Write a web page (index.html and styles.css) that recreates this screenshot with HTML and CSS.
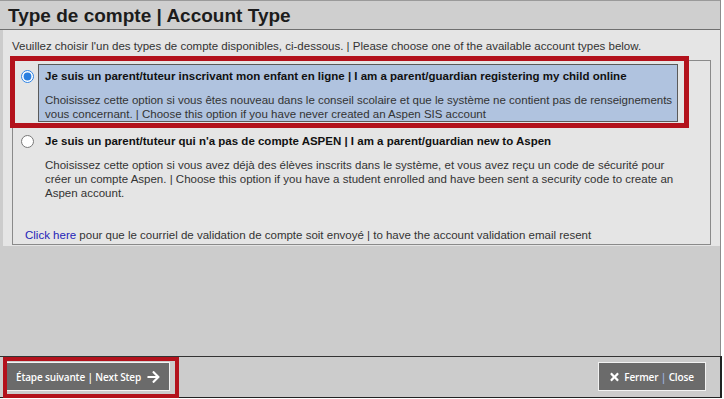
FILE: index.html
```html
<!DOCTYPE html>
<html lang="fr">
<head>
  <meta charset="UTF-8" />
  <title>Type de compte | Account Type</title>
  <link rel="stylesheet" href="styles.css">
</head>
<body>
  <div class="dialog">
    <div class="dialog-title">Type de compte | Account Type</div>

    <div class="dialog-body">
      <p class="intro">Veuillez choisir l'un des types de compte disponibles, ci-dessous. | Please choose one of the available account types below.</p>

      <div class="options">
        <label class="option selected">
          <input type="radio" name="accountType" checked>
          <div class="option-text">
            <div class="option-title">Je suis un parent/tuteur inscrivant mon enfant en ligne | I am a parent/guardian registering my child online</div>
            <div class="option-desc">Choisissez cette option si vous êtes nouveau dans le conseil scolaire et que le système ne contient pas de renseignements vous concernant. | Choose this option if you have never created an Aspen SIS account</div>
          </div>
        </label>

        <label class="option">
          <input type="radio" name="accountType">
          <div class="option-text">
            <div class="option-title">Je suis un parent/tuteur qui n'a pas de compte ASPEN | I am a parent/guardian new to Aspen</div>
            <div class="option-desc">Choisissez cette option si vous avez déjà des élèves inscrits dans le système, et vous avez reçu un code de sécurité pour créer un compte Aspen. | Choose this option if you have a student enrolled and have been sent a security code to create an Aspen account.</div>
          </div>
        </label>

        <p class="resend"><a href="#">Click here</a> pour que le courriel de validation de compte soit envoyé | to have the account validation email resent</p>
      </div>
    </div>

    <div class="filler"></div>

    <div class="dialog-footer">
      <button class="btn btn-next">
        <span>Étape suivante | Next Step</span>
        <svg class="icon" viewBox="0 0 448 512" width="13" height="14"><path fill="#fff" d="M190.5 66.9l22.2-22.2c9.4-9.4 24.6-9.4 33.9 0L441 239c9.4 9.4 9.4 24.6 0 33.9L246.6 467.3c-9.4 9.4-24.6 9.4-33.9 0l-22.2-22.2c-9.5-9.5-9.3-25 .4-34.3L311.4 296H24c-13.3 0-24-10.7-24-24v-32c0-13.3 10.7-24 24-24h287.4L190.9 101.2c-9.8-9.3-10-24.8-.4-34.3z"/></svg>
      </button>
      <button class="btn btn-close">
        <svg class="icon" viewBox="0 0 352 512" width="9" height="12"><path fill="#fff" d="M242.7 256l100.1-100.1c12.3-12.3 12.3-32.2 0-44.5l-22.2-22.2c-12.3-12.3-32.2-12.3-44.5 0L176 189.3 75.9 89.2c-12.3-12.3-32.2-12.3-44.5 0L9.2 111.4c-12.3 12.3-12.3 32.2 0 44.5L109.3 256 9.2 356.1c-12.3 12.3-12.3 32.2 0 44.5l22.2 22.2c12.3 12.3 32.2 12.3 44.5 0L176 322.7l100.1 100.1c12.3 12.3 32.2 12.3 44.5 0l22.2-22.2c12.3-12.3 12.3-32.2 0-44.5L242.7 256z"/></svg>
        <span>Fermer <span class="sep">|</span> Close</span>
      </button>
    </div>

    <!-- cadres rouges d'annotation -->
    <div class="mark mark-option"></div>
    <div class="mark mark-next"></div>
  </div>
</body>
</html>
```

FILE: styles.css
```css
body {
  margin: 0;
  background: #fff;
  font-family: "Liberation Sans", Arial, sans-serif;
  color: #333;
}
.dialog {
  position: relative;
  width: 720px;
  height: 398px;
  background: #cccccc;
  border-right: 1px solid #8c8c8c;
  display: flex;
  flex-direction: column;
}
.dialog-title {
  height: 28px;
  line-height: 29px;
  border-top: 1px solid #9a9a9a;
  border-bottom: 1px solid #6f6f6f;
  background: #cfcfcf;
  padding-left: 8px;
  font-size: 19px;
  font-weight: bold;
  color: #1c1c1c;
}
.dialog-body {
  margin-left: 3px;
  padding: 0 9px 1px;
  background: #e5e5e5;
}
.intro {
  margin: 9px 0 7px;
  font-size: 11.5px;
  line-height: 14px;
}
.options {
  border: 1px solid #8a8a8a;
  padding: 3px 32px 1px 8px;
}
.option {
  display: flex;
  align-items: flex-start;
  margin-bottom: 7px;
  font-size: 11.5px;
  line-height: 14px;
}
.option input {
  width: 13px;
  height: 13px;
  margin: 6px 4px 0 0;
  accent-color: #2a7fe0;
}
.option-text {
  flex: 1;
  border: 1px solid transparent;
  padding: 4px 2px 0 6px;
}
.option.selected .option-text {
  background: #b0c3df;
  border-color: #5a5a5a;
}
.option-title {
  font-weight: bold;
  color: #111;
}
.option-desc {
  margin-top: 10px;
}
.resend {
  margin: 27px 0 1px 4px;
  font-size: 11.5px;
  line-height: 14px;
}
.resend a {
  color: #2424b8;
  text-decoration: none;
}
.filler {
  flex: 1;
}
.dialog-footer {
  border-top: 1px solid #333;
  border-bottom: 1px solid #222;
  border-right: 2px solid #222;
  margin-right: -2px;
  padding: 5px 14px 0 6px;
  box-sizing: border-box;
  height: 42px;
  display: flex;
  justify-content: space-between;
  align-items: flex-start;
}
.btn {
  height: 29px;
  padding: 0;
  background: #6b6b6b;
  border: 1px solid #f2f2f2;
  color: #fff;
  font-family: "Open Sans", sans-serif;
  font-size: 10px;
  font-weight: 600;
  letter-spacing: -0.15px;
  display: flex;
  align-items: center;
  justify-content: center;
}
.btn-next {
  width: 164px;
  gap: 6px;
}
.btn-close {
  width: 108px;
  gap: 5px;
}
.btn .sep {
  color: #9fb6e6;
}
.mark {
  position: absolute;
  border: 5px solid #b3121c;
  box-sizing: border-box;
}
.mark-option {
  left: 10px;
  top: 56px;
  width: 679px;
  height: 72px;
}
.mark-next {
  left: 3px;
  top: 357px;
  width: 176px;
  height: 41px;
  border-width: 4px;
}
```
